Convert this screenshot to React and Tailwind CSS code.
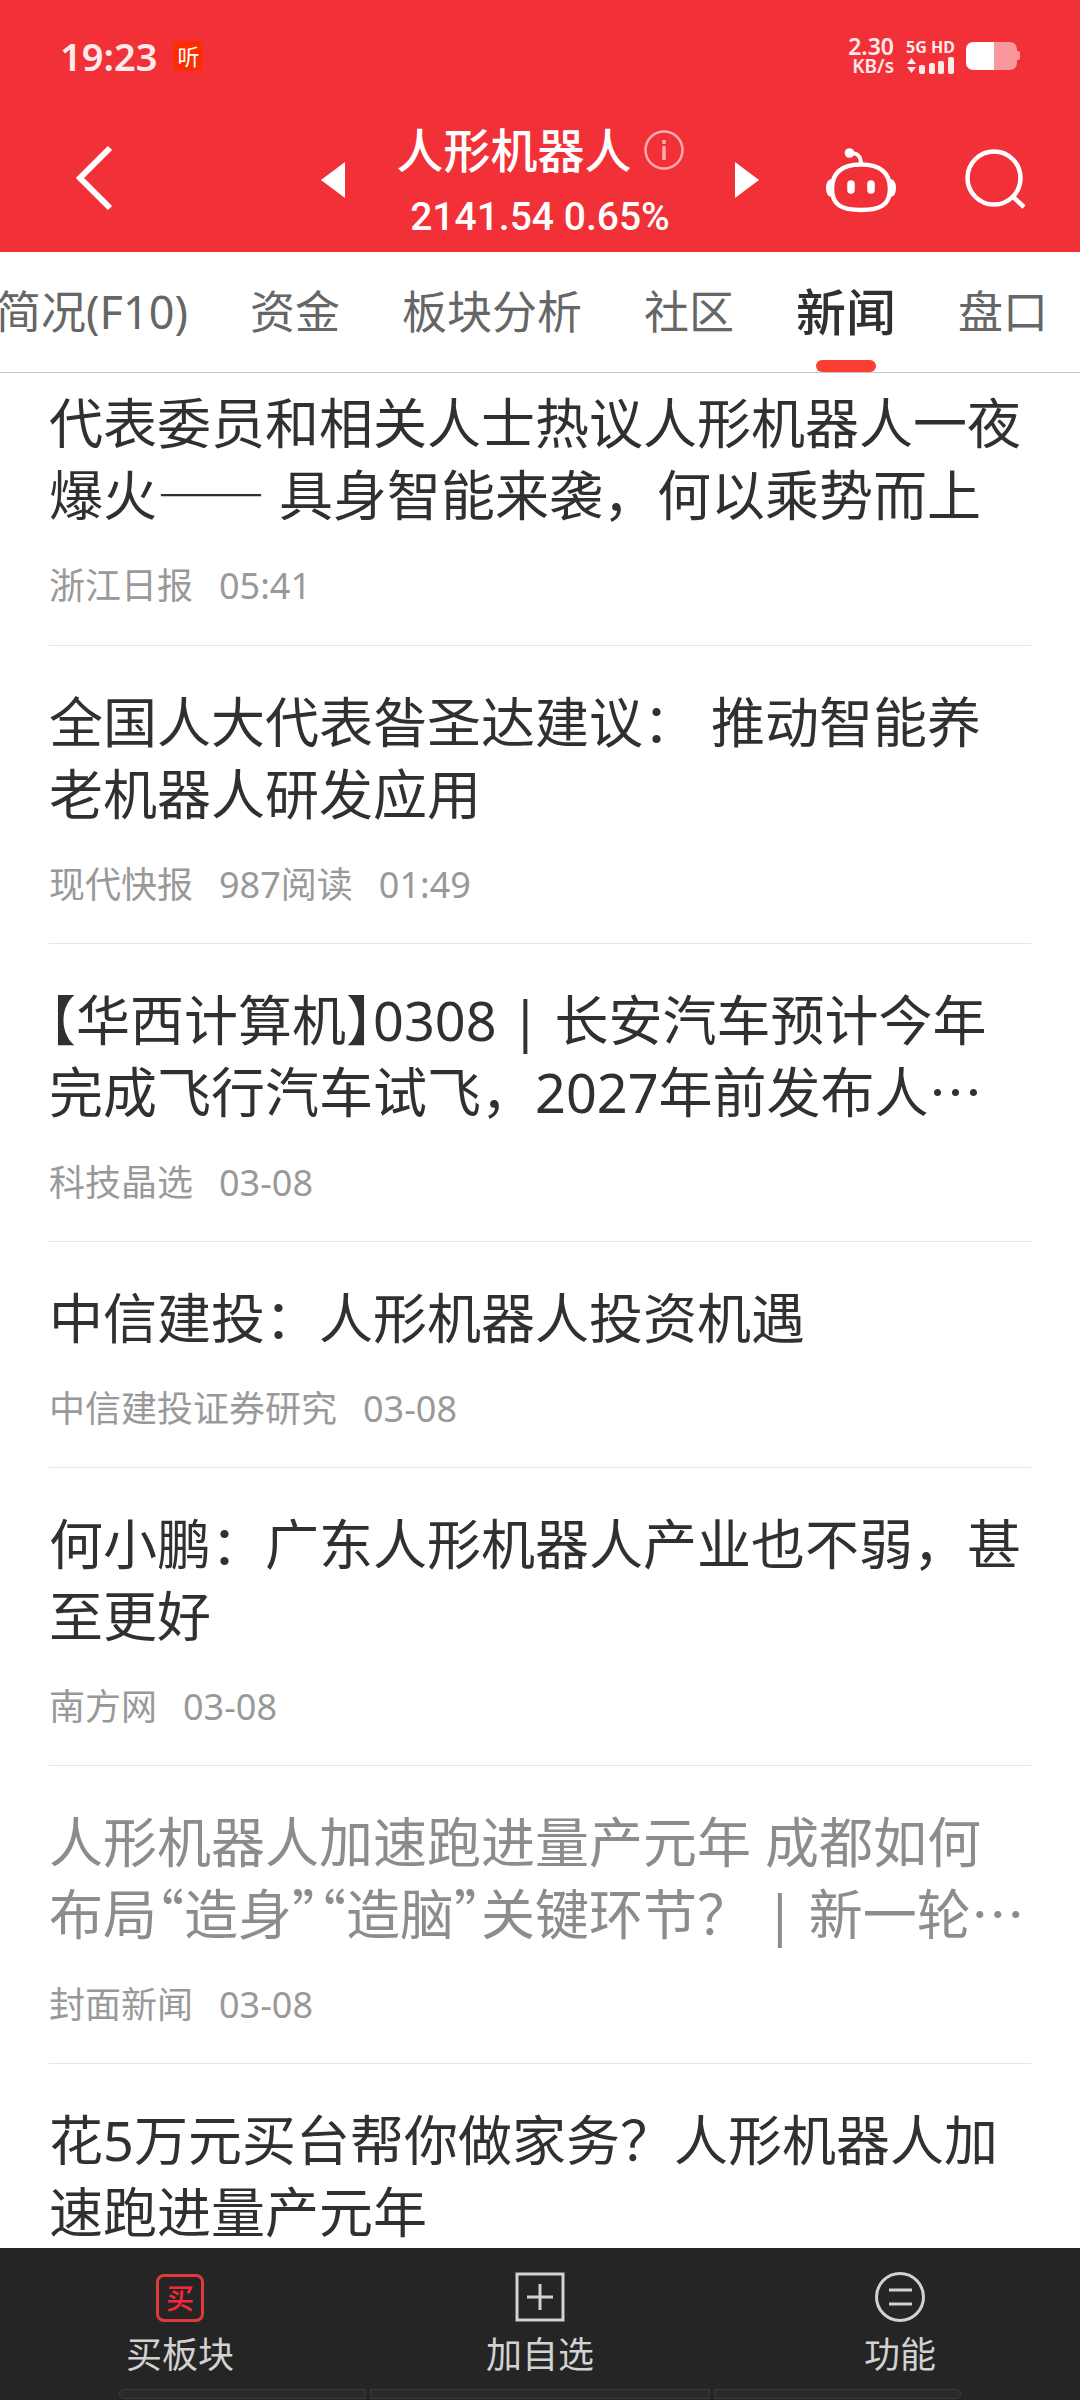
import React from "react";

const NEWS = [
  {
    title: "代表委员和相关人士热议人形机器人一夜爆火—— 具身智能来袭，何以乘势而上",
    meta: ["浙江日报", "05:41"],
  },
  {
    title: "全国人大代表昝圣达建议： 推动智能养老机器人研发应用",
    meta: ["现代快报", "987阅读", "01:49"],
  },
  {
    title: "【华西计算机】0308 | 长安汽车预计今年完成飞行汽车试飞，2027年前发布人…",
    meta: ["科技晶选", "03-08"],
  },
  { title: "中信建投：人形机器人投资机遇", meta: ["中信建投证券研究", "03-08"] },
  { title: "何小鹏：广东人形机器人产业也不弱，甚至更好", meta: ["南方网", "03-08"] },
  {
    title: "人形机器人加速跑进量产元年 成都如何布局“造身”“造脑”关键环节？ | 新一轮…",
    meta: ["封面新闻", "03-08"],
    read: true,
  },
  { title: "花5万元买台帮你做家务？人形机器人加速跑进量产元年", meta: [] },
];

const TABS = ["简况(F10)", "资金", "板块分析", "社区", "新闻", "盘口"];

// Brackets and quotes take half an em; dashes and the ellipsis use the Chinese face.
function Title({ text }) {
  return text.split(/([【】“”…]|——)/).map((part, i) => {
    if (part === "…" || part === "——") {
      return (
        <span key={i} className="font-['Noto_Sans_CJK_SC',sans-serif] leading-none">
          {part}
        </span>
      );
    }
    if (/^[【】“”]$/.test(part)) {
      return (
        <span
          key={i}
          className="font-['Noto_Sans_CJK_SC',sans-serif] leading-none [font-feature-settings:'halt']"
        >
          {part}
        </span>
      );
    }
    return part;
  });
}

function StatusBar() {
  return (
    <div className="flex items-center justify-between pt-9 pr-[60px] pl-[60px] text-white/90">
      <div className="flex items-center gap-4">
        <span className="text-[38px] leading-10 font-semibold">19:23</span>
        <span className="flex size-[30px] items-center justify-center rounded-md bg-[#fc2c03] text-[22px] leading-none text-white">
          听
        </span>
      </div>
      <div className="flex items-center gap-3">
        <div className="flex flex-col items-end font-semibold">
          <span className="text-[23px] leading-5">2.30</span>
          <span className="text-[19px] leading-5">KB/s</span>
        </div>
        <div className="flex w-12 flex-col gap-0.5">
          <span className="text-[16px] leading-4 font-bold whitespace-nowrap">5G HD</span>
          <svg viewBox="0 0 48 17" className="h-[17px] w-12" fill="currentColor" aria-hidden="true">
            <path d="M1 7 5.5 1 10 7zM1 10h9l-4.500 6z" />
            <rect x="13" y="8" width="6" height="9" rx="2" />
            <rect x="23" y="6" width="6" height="11" rx="2" />
            <rect x="32" y="4" width="6" height="13" rx="2" />
            <rect x="42" y="0" width="6" height="17" rx="2" />
          </svg>
        </div>
        <svg viewBox="0 0 54 28" className="h-7 w-[54px]" fill="#fff" aria-hidden="true">
          <path d="M28 0h16a7 7 0 0 1 7 7v2h1q2 0 2 2v5q0 2-2 2h-1v3a7 7 0 0 1-7 7H28z" opacity=".5" />
          <path d="M7 0h21v28H7a7 7 0 0 1-7-7V7a7 7 0 0 1 7-7z" />
        </svg>
      </div>
    </div>
  );
}

function Header() {
  return (
    <header className="bg-[#f13038] text-white">
      <StatusBar />
      <div className="grid grid-cols-[1fr_auto_1fr] items-center pt-10 pb-2">
        <button type="button" aria-label="返回" className="ml-[70px] w-12 pb-1">
          <svg viewBox="0 0 48 66" className="h-[66px] w-12" fill="none" stroke="currentColor" strokeWidth="6" aria-hidden="true">
            <path d="M40 3 10 33 40 63" />
          </svg>
        </button>
        <div className="flex items-center">
          <button type="button" aria-label="上一个">
            <svg viewBox="0 0 24 36" className="h-9 w-6" fill="currentColor" aria-hidden="true">
              <path d="M0 18 24 0v36z" />
            </svg>
          </button>
          <div className="flex w-[390px] flex-col items-center">
            <div className="flex items-center gap-3">
              <h1 className="text-[47px] leading-[68px] font-medium">人形机器人</h1>
              <button type="button" aria-label="说明">
                <svg viewBox="0 0 40 40" className="size-10" fill="none" stroke="#fff" strokeOpacity=".6" aria-hidden="true">
                  <circle cx="20" cy="20" r="18.500" strokeWidth="2.500" />
                  <path d="M20 16v14M20 10v4" strokeWidth="3.500" />
                </svg>
              </button>
            </div>
            <p className="-mb-1.5 font-[Roboto,sans-serif] text-[39px] leading-[66px] font-medium">2141.54 0.65%</p>
          </div>
          <button type="button" aria-label="下一个">
            <svg viewBox="0 0 24 36" className="h-9 w-6" fill="currentColor" aria-hidden="true">
              <path d="M24 18 0 0v36z" />
            </svg>
          </button>
        </div>
        <div className="flex items-center justify-end gap-[67px] pr-[54px]">
          <button type="button" aria-label="智能助手">
            <svg viewBox="0 0 72 66" className="h-[66px] w-[72px]" fill="none" stroke="currentColor" aria-hidden="true">
              <path d="M36 17.500c20 0 29 9 29 24 0 16-9 21.500-29 21.500S7 57.500 7 41.500c0-15 9-24 29-24z" strokeWidth="4.500" />
              <path d="M25 6c8 0 11 3 11 11" strokeWidth="4" />
              <circle cx="24.500" cy="6" r="4.800" fill="currentColor" stroke="none" />
              <path d="M7 32c-4 0-6 4-6 9s2 9 6 9zM65 32c4 0 6 4 6 9s-2 9-6 9z" fill="currentColor" stroke="none" />
              <path d="M26 37v6M46 37v6" strokeWidth="7.500" strokeLinecap="round" />
            </svg>
          </button>
          <button type="button" aria-label="搜索">
            <svg viewBox="0 0 62 62" className="size-[62px]" fill="none" stroke="currentColor" strokeWidth="4.500" aria-hidden="true">
              <circle cx="30" cy="29" r="26.500" />
              <path d="M48 47 60 58" />
            </svg>
          </button>
        </div>
      </div>
    </header>
  );
}

function Tabs() {
  return (
    <nav className="flex justify-end gap-[62px] overflow-hidden border-b border-[#c8c8c8] bg-white pr-8">
      {TABS.map((tab) => {
        const active = tab === "新闻";
        return (
          <a
            key={tab}
            href="#"
            aria-current={active ? "page" : undefined}
            className={
              active
                ? "relative shrink-0 text-[50px] leading-[120px] font-medium text-[#303030]"
                : "shrink-0 text-[45px] leading-[120px] text-[#666]"
            }
          >
            {tab}
            {active && (
              <span className="absolute bottom-0 left-1/2 h-3 w-[60px] -translate-x-1/2 rounded-full bg-[#fc3d32]" />
            )}
          </a>
        );
      })}
    </nav>
  );
}

function NewsItem({ item, first }) {
  return (
    <li className={first ? "border-b border-[#e5e5e5] pt-3.5 pb-[34px]" : "border-b border-[#e5e5e5] pt-10 pb-[33px]"}>
      <a href="#" className="block">
        <h2 className={item.read ? "text-[54px] leading-[72px] text-[#8c8c8c]" : "text-[54px] leading-[72px] text-[#303030]"}>
          <Title text={item.title} />
        </h2>
        {item.meta.length > 0 && (
          <p className="mt-[30px] flex gap-[26px] text-[36px] leading-[50px] text-[#999]">
            {item.meta.map((m) => (
              <span key={m}>{m}</span>
            ))}
          </p>
        )}
      </a>
    </li>
  );
}

function BottomBar() {
  const item = "flex flex-col items-center gap-2 text-[36px] leading-[50px] text-[#d2d2d2]";
  return (
    <footer className="bg-[#252525] pt-6 pb-px">
      <div className="grid grid-cols-3">
        <button type="button" className={item}>
          <span className="flex size-[50px] items-end justify-center">
            <span className="flex size-12 items-center justify-center rounded-lg border-3 border-[#e0383c] text-[28px] leading-none font-medium text-[#f8283c]">
              买
            </span>
          </span>
          买板块
        </button>
        <button type="button" className={item}>
          <svg viewBox="0 0 50 50" className="size-[50px]" fill="none" stroke="currentColor" strokeWidth="3" aria-hidden="true">
            <path d="M2 2h46v46H2zM12 25h26M25 12v26" />
          </svg>
          加自选
        </button>
        <button type="button" className={item}>
          <svg viewBox="0 0 50 50" className="size-[50px]" fill="none" stroke="currentColor" strokeWidth="3" aria-hidden="true">
            <circle cx="25" cy="25" r="23.500" />
            <path d="M14 18h23M14 32h23" />
          </svg>
          功能
        </button>
      </div>
      <div className="mx-[119px] mt-[9px] grid grid-cols-[247fr_340fr_247fr] gap-1">
        <span className="h-[10px] rounded-l-full border border-[#3a3a3a] bg-[#2a2a2a]" />
        <span className="h-[10px] border border-[#3a3a3a] bg-[#2a2a2a]" />
        <span className="h-[10px] rounded-r-full border border-[#3a3a3a] bg-[#2a2a2a]" />
      </div>
    </footer>
  );
}

export default function App() {
  return (
    <div
      lang="zh-CN"
      className="flex h-screen flex-col bg-white font-['Noto_Sans','Noto_Sans_CJK_SC',sans-serif]"
    >
      <Header />
      <Tabs />
      <main className="min-h-0 flex-1 overflow-y-auto px-[49px] [scrollbar-width:none]">
        <ul>
          {NEWS.map((item, i) => (
            <NewsItem key={item.title} item={item} first={i === 0} />
          ))}
        </ul>
      </main>
      <BottomBar />
    </div>
  );
}
